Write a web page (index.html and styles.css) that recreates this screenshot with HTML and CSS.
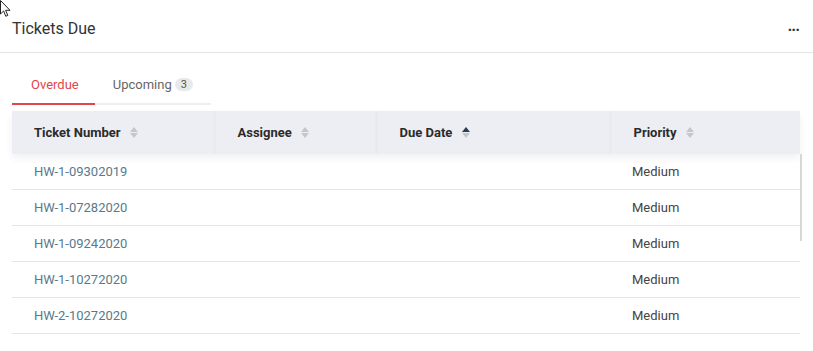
FILE: index.html
```html
<!DOCTYPE html>
<html lang="en">
<head>
    <meta charset="UTF-8">
    <title>Tickets Due</title>
    <link rel="stylesheet" href="styles.css">
</head>
<body>
    <svg class="cursor" width="12" height="18" viewBox="0 0 12 18">
        <path d="M0.5 0.5 L0.5 14 L3.6 11 L5.8 16.3 L7.8 15.4 L5.6 10.3 L10 10.3 Z" fill="#fff" stroke="#222" stroke-width="1"/>
    </svg>
    <div class="widget">
        <div class="widget-header">
            <h2 class="widget-title">Tickets Due</h2>
            <span class="more">&middot;&middot;&middot;</span>
        </div>
        <div class="tabs">
            <button class="tab active">Overdue</button>
            <button class="tab">Upcoming <span class="badge">3</span></button>
        </div>
        <div class="table-wrap">
            <table class="tickets">
                <colgroup>
                    <col style="width: 202px">
                    <col style="width: 162px">
                    <col style="width: 234px">
                    <col>
                </colgroup>
                <thead>
                    <tr>
                        <th>Ticket Number <span class="sort"><i class="up"></i><i class="down"></i></span></th>
                        <th>Assignee <span class="sort"><i class="up"></i><i class="down"></i></span></th>
                        <th>Due Date <span class="sort asc"><i class="up"></i><i class="down"></i></span></th>
                        <th>Priority <span class="sort"><i class="up"></i><i class="down"></i></span></th>
                    </tr>
                </thead>
                <tbody>
                    <tr><td class="ticket">HW-1-09302019</td><td></td><td></td><td>Medium</td></tr>
                    <tr><td class="ticket">HW-1-07282020</td><td></td><td></td><td>Medium</td></tr>
                    <tr><td class="ticket">HW-1-09242020</td><td></td><td></td><td>Medium</td></tr>
                    <tr><td class="ticket">HW-1-10272020</td><td></td><td></td><td>Medium</td></tr>
                    <tr><td class="ticket">HW-2-10272020</td><td></td><td></td><td>Medium</td></tr>
                </tbody>
            </table>
            <div class="scrollbar"></div>
        </div>
    </div>
</body>
</html>
```

FILE: styles.css
```css
body {
    margin: 0;
    padding: 0;
    font-family: Roboto, "Liberation Sans", Arial, sans-serif;
    background-color: #fff;
    color: #333;
}
.cursor {
    position: absolute;
    left: 0;
    top: 0;
}
.widget {
    width: 813px;
}
.widget-header {
    display: flex;
    justify-content: space-between;
    align-items: center;
    height: 53px;
    padding: 4px 14px 0 12px;
    box-sizing: border-box;
    border-bottom: 1px solid #e4e4e4;
}
.widget-title {
    margin: 0;
    font-size: 16px;
    font-weight: 400;
    color: #333;
}
.more {
    font-size: 16px;
    font-weight: 700;
    color: #333;
    letter-spacing: -1px;
    margin-top: 2px;
}
.tabs {
    display: flex;
    margin: 13px 0 0 12px;
    width: 199px;
    border-bottom: 2px solid #eee;
}
.tab {
    background: none;
    border: none;
    font-family: inherit;
    font-size: 13px;
    color: #666;
    padding: 0 17px 0 18px;
    height: 39px;
    margin-bottom: -2px;
    border-bottom: 2px solid transparent;
    cursor: pointer;
    display: flex;
    align-items: center;
}
.tab.active {
    color: #e0474c;
    border-bottom-color: #e0474c;
    padding: 0 16px 0 19px;
}
.badge {
    display: inline-block;
    background-color: #e9e9e9;
    color: #555;
    font-size: 11px;
    border-radius: 7px;
    padding: 0 6px;
    line-height: 13px;
    margin-left: 3px;
}
.table-wrap {
    display: flex;
    margin: 6px 0 0 12px;
    width: 790px;
}
.tickets {
    width: 788px;
    border-collapse: collapse;
    table-layout: fixed;
    font-size: 13px;
}
.tickets thead tr {
    background-color: #edeef3;
    box-shadow: 0 4px 8px rgba(0, 0, 0, 0.06);
}
.tickets th {
    height: 43px;
    text-align: left;
    font-weight: 700;
    color: #2b2b2b;
    padding: 0 0 0 22px;
    border-right: 3px solid #e9eaef;
}
.tickets th:last-child {
    border-right: none;
}
.tickets td {
    height: 35px;
    padding: 0 0 0 22px;
    border-bottom: 1px solid #e6e6e6;
    color: #444;
}
.tickets td.ticket {
    color: #587a8c;
}
.sort {
    display: inline-flex;
    flex-direction: column;
    gap: 1px;
    vertical-align: middle;
    margin-left: 6px;
    margin-top: -2px;
}
.sort i {
    width: 0;
    height: 0;
    border-left: 4.5px solid transparent;
    border-right: 4.5px solid transparent;
}
.sort .up {
    border-bottom: 5px solid #c4c6cc;
}
.sort .down {
    border-top: 5px solid #c4c6cc;
}
.sort.asc .up {
    border-bottom-color: #2d3b55;
}
.scrollbar {
    width: 2px;
    height: 87px;
    margin-top: 43px;
    background-color: #d8d8d8;
}
```
